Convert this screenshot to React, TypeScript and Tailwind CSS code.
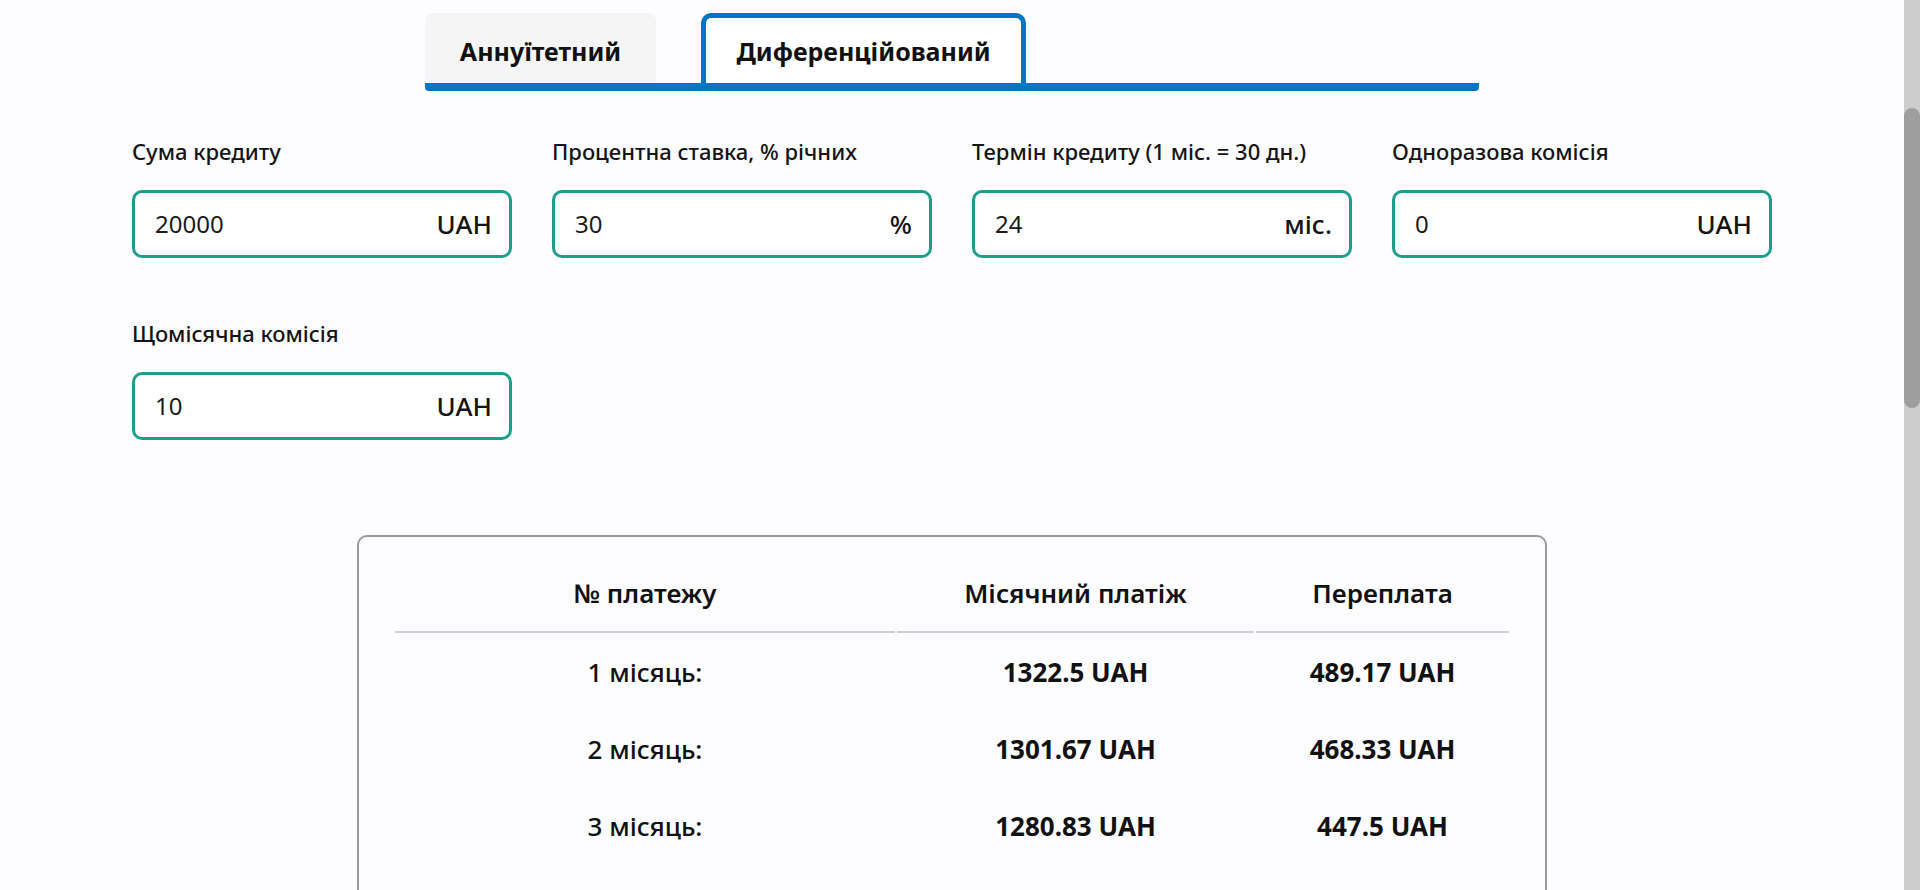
import React from "react";

type Field = { label: string; value: string; suffix: string };

const fields: Field[] = [
  { label: "Сума кредиту", value: "20000", suffix: "UAH" },
  { label: "Процентна ставка, % річних", value: "30", suffix: "%" },
  { label: "Термін кредиту (1 міс. = 30 дн.)", value: "24", suffix: "міс." },
  { label: "Одноразова комісія", value: "0", suffix: "UAH" },
  { label: "Щомісячна комісія", value: "10", suffix: "UAH" },
];

function fmt(v: number): string {
  return String(Math.round(v * 100) / 100);
}

function buildRows(count: number) {
  const sum = 20000;
  const months = 24;
  const rate = 0.3 / 12;
  const fee = 10;
  const principal = sum / months;
  const rows: { n: number; pay: string; over: string }[] = [];
  for (let k = 1; k <= count; k++) {
    const interest = (sum - k * principal) * rate;
    const over = interest + fee;
    rows.push({ n: k, pay: fmt(principal + over), over: fmt(over) });
  }
  return rows;
}

function InputField({ f }: { f: Field }) {
  return (
    <div className="flex flex-col">
      <div className="h-[30px] text-[22px] leading-[30px] font-medium text-[#141414] whitespace-nowrap">
        {f.label}
      </div>
      <div className="mt-[24px] flex h-[68px] items-center justify-between rounded-[10px] border-[3px] border-[#1f9d8b] bg-white pl-5 pr-[17px]">
        <span className="text-[24px] leading-[30px] text-[#1a1a1a]">{f.value}</span>
        <span className="text-[26px] leading-[30px] font-medium text-[#141414]">{f.suffix}</span>
      </div>
    </div>
  );
}

export default function App() {
  const rows = buildRows(24);
  return (
    <div className="flex h-screen overflow-hidden bg-[#fdfcff] font-['Noto_Sans',sans-serif] text-[#111]">
      <main className="min-w-0 flex-1 overflow-hidden">
        {/* Tabs */}
        <div className="mx-auto w-[1054px] pt-[13px]">
          <div className="flex items-end gap-[45px]">
            <div className="flex h-[70px] w-[231px] items-center justify-center rounded-t-[8px] bg-[#f4f5f4] pt-[6px] text-[25px] leading-[34px] font-bold text-[#111]">
              Аннуїтетний
            </div>
            <div className="flex h-[70px] w-[325px] items-center justify-center rounded-t-[10px] border-[5px] border-b-0 border-[#0075c2] bg-white text-[25px] leading-[34px] font-bold text-[#111]">
              Диференційований
            </div>
          </div>
          <div className="h-[8px] rounded-b-[4px] bg-[#0075c2]" />
        </div>

        {/* Form */}
        <div className="mx-auto mt-[45px] grid w-[1640px] grid-cols-4 gap-x-10 gap-y-[60px]">
          {fields.map((f) => (
            <InputField key={f.label} f={f} />
          ))}
        </div>

        {/* Table */}
        <div className="mx-auto mt-[95px] w-[1190px] rounded-[10px] border-2 border-[#9a9a9a] bg-[#fdfcff] px-[34px] pt-4 pb-8">
          <table className="w-full table-fixed border-separate border-spacing-[2px] text-center">
            <colgroup>
              <col className="w-[500px]" />
              <col className="w-[357px]" />
              <col className="w-[253px]" />
            </colgroup>
            <thead>
              <tr>
                <th className="border-b-2 border-[#cfcfcf] pt-5 pb-5 text-[26px] leading-[36px] font-semibold">
                  № платежу
                </th>
                <th className="border-b-2 border-[#cfcfcf] pt-5 pb-5 text-[26px] leading-[36px] font-semibold">
                  Місячний платіж
                </th>
                <th className="border-b-2 border-[#cfcfcf] pt-5 pb-5 text-[26px] leading-[36px] font-semibold">
                  Переплата
                </th>
              </tr>
            </thead>
            <tbody>
              {rows.map((r) => (
                <tr key={r.n}>
                  <td className="py-5 text-[26px] leading-[35px] font-medium">{r.n} місяць:</td>
                  <td className="py-5 text-[26px] leading-[35px] font-bold">{r.pay} UAH</td>
                  <td className="py-5 text-[26px] leading-[35px] font-bold">{r.over} UAH</td>
                </tr>
              ))}
            </tbody>
          </table>
        </div>
      </main>

      {/* Scrollbar */}
      <div className="flex w-4 shrink-0 flex-col bg-[#cdcdcd]">
        <div className="h-[108px] shrink-0" />
        <div className="h-[300px] shrink-0 rounded-full bg-[#9e9e9e]" />
      </div>
    </div>
  );
}
